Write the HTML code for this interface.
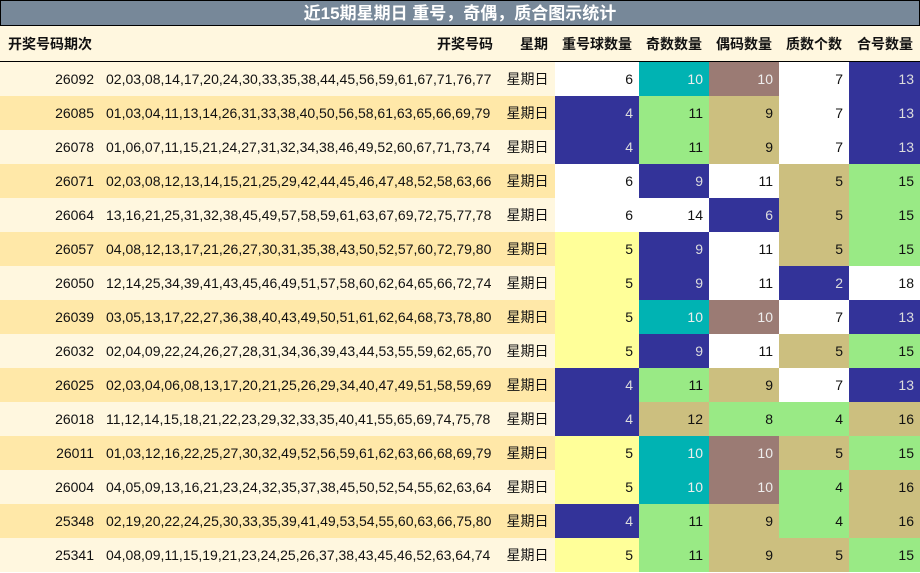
<!DOCTYPE html>
<html><head><meta charset="utf-8"><style>
body{margin:0;width:920px;height:573px;overflow:hidden;background:#fff;font-family:"Liberation Sans","Noto Sans CJK SC",sans-serif;}
.title{position:absolute;left:0;top:0;width:918px;height:24px;background:#778899;border:1px solid #000;color:#fff;font-weight:bold;font-size:17px;text-align:center;line-height:25px;}
table{position:absolute;left:0;top:26px;border-collapse:collapse;table-layout:fixed;width:920px;}
td{padding:0 6px 0 0;height:34px;font-size:14px;color:#111;text-align:right;white-space:nowrap;overflow:hidden;}
tr.h td{height:35px;font-weight:bold;background:#fff7df;border-bottom:1px solid #000;text-align:right;padding-right:7px;}
tr.a td{background:#fff7df}
tr.b td{background:#ffe8a8}
td.n{text-align:left;padding-left:6px}
td.w{text-align:center;padding:0}
tr td.W{background:#fff}
tr td.N{background:#333399;color:#ddd}
tr td.T{background:#00b3b3;color:#eee}
tr td.B{background:#9b7b74;color:#eee}
tr td.G{background:#99ea85}
tr td.K{background:#ccbf7f}
tr td.Y{background:#ffff99}
</style></head><body>
<div class="title">近15期星期日 重号，奇偶，质合图示统计</div>
<table>
<colgroup><col style="width:100px"><col style="width:400px"><col style="width:55px"><col style="width:84px"><col style="width:70px"><col style="width:70px"><col style="width:70px"><col style="width:71px"></colgroup>
<tr class="h"><td style="text-align:left;padding-left:8px">开奖号码期次</td><td>开奖号码</td><td>星期</td><td>重号球数量</td><td>奇数数量</td><td>偶码数量</td><td>质数个数</td><td>合号数量</td></tr>
<tr class="a"><td>26092</td><td class="n">02,03,08,14,17,20,24,30,33,35,38,44,45,56,59,61,67,71,76,77</td><td class="w">星期日</td><td class="W">6</td><td class="T">10</td><td class="B">10</td><td class="W">7</td><td class="N">13</td></tr>
<tr class="b"><td>26085</td><td class="n">01,03,04,11,13,14,26,31,33,38,40,50,56,58,61,63,65,66,69,79</td><td class="w">星期日</td><td class="N">4</td><td class="G">11</td><td class="K">9</td><td class="W">7</td><td class="N">13</td></tr>
<tr class="a"><td>26078</td><td class="n">01,06,07,11,15,21,24,27,31,32,34,38,46,49,52,60,67,71,73,74</td><td class="w">星期日</td><td class="N">4</td><td class="G">11</td><td class="K">9</td><td class="W">7</td><td class="N">13</td></tr>
<tr class="b"><td>26071</td><td class="n">02,03,08,12,13,14,15,21,25,29,42,44,45,46,47,48,52,58,63,66</td><td class="w">星期日</td><td class="W">6</td><td class="N">9</td><td class="W">11</td><td class="K">5</td><td class="G">15</td></tr>
<tr class="a"><td>26064</td><td class="n">13,16,21,25,31,32,38,45,49,57,58,59,61,63,67,69,72,75,77,78</td><td class="w">星期日</td><td class="W">6</td><td class="W">14</td><td class="N">6</td><td class="K">5</td><td class="G">15</td></tr>
<tr class="b"><td>26057</td><td class="n">04,08,12,13,17,21,26,27,30,31,35,38,43,50,52,57,60,72,79,80</td><td class="w">星期日</td><td class="Y">5</td><td class="N">9</td><td class="W">11</td><td class="K">5</td><td class="G">15</td></tr>
<tr class="a"><td>26050</td><td class="n">12,14,25,34,39,41,43,45,46,49,51,57,58,60,62,64,65,66,72,74</td><td class="w">星期日</td><td class="Y">5</td><td class="N">9</td><td class="W">11</td><td class="N">2</td><td class="W">18</td></tr>
<tr class="b"><td>26039</td><td class="n">03,05,13,17,22,27,36,38,40,43,49,50,51,61,62,64,68,73,78,80</td><td class="w">星期日</td><td class="Y">5</td><td class="T">10</td><td class="B">10</td><td class="W">7</td><td class="N">13</td></tr>
<tr class="a"><td>26032</td><td class="n">02,04,09,22,24,26,27,28,31,34,36,39,43,44,53,55,59,62,65,70</td><td class="w">星期日</td><td class="Y">5</td><td class="N">9</td><td class="W">11</td><td class="K">5</td><td class="G">15</td></tr>
<tr class="b"><td>26025</td><td class="n">02,03,04,06,08,13,17,20,21,25,26,29,34,40,47,49,51,58,59,69</td><td class="w">星期日</td><td class="N">4</td><td class="G">11</td><td class="K">9</td><td class="W">7</td><td class="N">13</td></tr>
<tr class="a"><td>26018</td><td class="n">11,12,14,15,18,21,22,23,29,32,33,35,40,41,55,65,69,74,75,78</td><td class="w">星期日</td><td class="N">4</td><td class="K">12</td><td class="G">8</td><td class="G">4</td><td class="K">16</td></tr>
<tr class="b"><td>26011</td><td class="n">01,03,12,16,22,25,27,30,32,49,52,56,59,61,62,63,66,68,69,79</td><td class="w">星期日</td><td class="Y">5</td><td class="T">10</td><td class="B">10</td><td class="K">5</td><td class="G">15</td></tr>
<tr class="a"><td>26004</td><td class="n">04,05,09,13,16,21,23,24,32,35,37,38,45,50,52,54,55,62,63,64</td><td class="w">星期日</td><td class="Y">5</td><td class="T">10</td><td class="B">10</td><td class="G">4</td><td class="K">16</td></tr>
<tr class="b"><td>25348</td><td class="n">02,19,20,22,24,25,30,33,35,39,41,49,53,54,55,60,63,66,75,80</td><td class="w">星期日</td><td class="N">4</td><td class="G">11</td><td class="K">9</td><td class="G">4</td><td class="K">16</td></tr>
<tr class="a"><td>25341</td><td class="n">04,08,09,11,15,19,21,23,24,25,26,37,38,43,45,46,52,63,64,74</td><td class="w">星期日</td><td class="Y">5</td><td class="G">11</td><td class="K">9</td><td class="K">5</td><td class="G">15</td></tr>
</table>
</body></html>
